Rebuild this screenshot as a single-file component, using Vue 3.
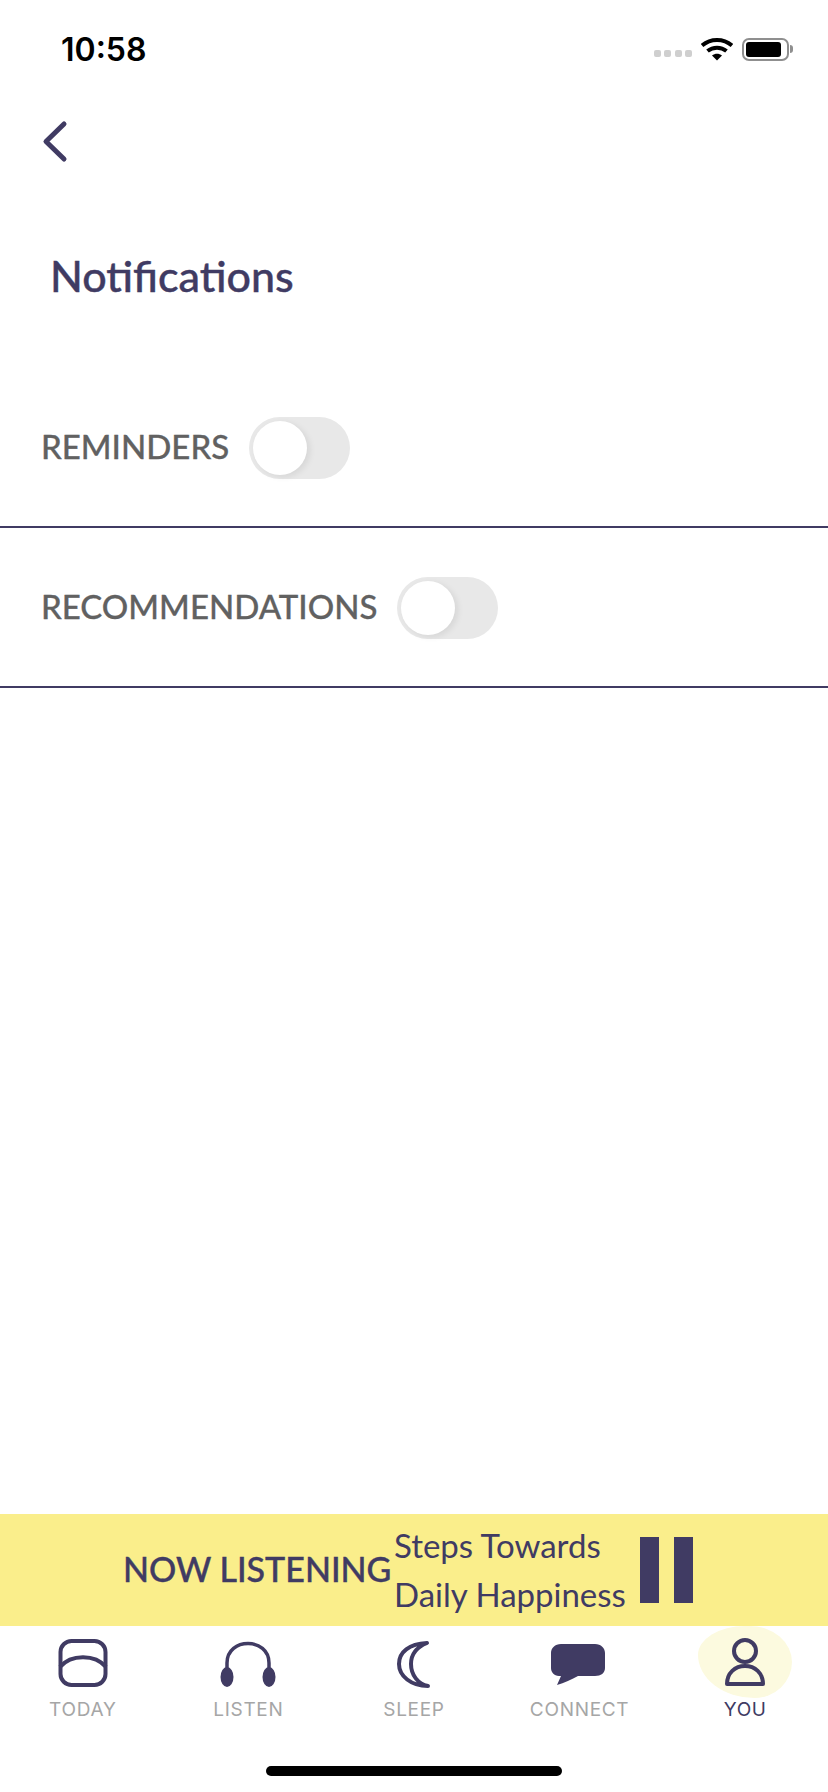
<template>
  <div class="screen">
    <div class="status">
      <span class="time">10:58</span>
      <div class="status-icons">
        <div class="dots"><i></i><i></i><i></i><i></i></div>
        <svg class="wifi" width="32" height="24" viewBox="0 0 32 24">
          <path d="M1 8.500C9.500 1 22.500 1 31 8.500" fill="none" stroke="#000" stroke-width="4" />
          <path d="M6.500 14C12 9.500 20 9.500 25.500 14" fill="none" stroke="#000" stroke-width="4" />
          <path d="M11 18.500C14 16 18 16 21 18.500L16 23.500Z" fill="#000" />
        </svg>
        <div class="battery">
          <div class="battery-body"><div class="battery-level"></div></div>
          <div class="battery-tip"></div>
        </div>
      </div>
    </div>

    <button class="back" type="button">
      <svg width="26" height="44" viewBox="0 0 26 44">
        <path d="M22 4L4 21.500L22 39" fill="none" stroke="#403b63" stroke-width="5" stroke-linecap="round" stroke-linejoin="round" />
      </svg>
    </button>

    <h1 class="title">Notifications</h1>

    <section class="settings">
      <div v-for="row in rows" :key="row" class="row">
        <span class="row-label">{{ row }}</span>
        <div class="toggle"><div class="knob"></div></div>
      </div>
    </section>

    <div class="spacer"></div>

    <section class="player">
      <span class="now">NOW LISTENING</span>
      <div class="track">
        <span>Steps Towards</span>
        <span>Daily Happiness</span>
      </div>
      <div class="pause"><i></i><i></i></div>
    </section>

    <nav class="tabs">
      <div v-for="tab in tabs" :key="tab.label" class="tab" :class="{ active: tab.active }">
        <div v-if="tab.active" class="blob"></div>
        <svg class="tab-icon" width="64" height="52" viewBox="0 0 64 52">
          <template v-if="tab.icon === 'today'">
            <rect x="9.500" y="4" width="45" height="44" rx="11" fill="none" stroke="#403b63" stroke-width="4" />
            <path d="M9 30C20 17 44 17 55 30" fill="none" stroke="#403b63" stroke-width="4" />
          </template>
          <template v-else-if="tab.icon === 'listen'">
            <path d="M11 38V26C11 0 53 0 53 26V38" fill="none" stroke="#403b63" stroke-width="3.500" />
            <ellipse cx="11" cy="40" rx="6.500" ry="10" fill="#403b63" />
            <ellipse cx="53" cy="40" rx="6.500" ry="10" fill="#403b63" />
          </template>
          <template v-else-if="tab.icon === 'sleep'">
            <path d="M45 6C27 7 17 15 17 27C17 39 29 49 46 49C36 47 29 38 29 27C29 17 35 10 45 6Z" fill="none" stroke="#403b63" stroke-width="4" stroke-linejoin="round" />
          </template>
          <template v-else-if="tab.icon === 'connect'">
            <path d="M13 7H47C53 7 57 11 57 16V31C57 36 53 39 47 39H30C24 42 16 46 9 48L13 39H11C6 39 3 35 3 31V16C3 11 7 7 13 7Z" fill="#403b63" />
          </template>
          <template v-else>
            <circle cx="32" cy="14" r="11" fill="none" stroke="#403b63" stroke-width="4" />
            <path d="M14 47C14 36 22 29 32 29C42 29 50 36 50 47Z" fill="none" stroke="#403b63" stroke-width="4" stroke-linejoin="round" />
          </template>
        </svg>
        <span class="tab-label">{{ tab.label }}</span>
      </div>
    </nav>

    <div class="home-bar"><div class="home-indicator"></div></div>
  </div>
</template>

<script setup>
const rows = ["REMINDERS", "RECOMMENDATIONS"]

const tabs = [
  { label: "TODAY", icon: "today" },
  { label: "LISTEN", icon: "listen" },
  { label: "SLEEP", icon: "sleep" },
  { label: "CONNECT", icon: "connect" },
  { label: "YOU", icon: "you", active: true },
]
</script>

<style>
html,
body {
  margin: 0;
  background: #fff;
}
</style>

<style scoped>
.screen {
  width: 828px;
  height: 1792px;
  display: flex;
  flex-direction: column;
  background: #fff;
  overflow: hidden;
  font-family: "Lato", "Liberation Sans", sans-serif;
}

.status {
  height: 100px;
  box-sizing: border-box;
  padding: 31px 35px 0 61px;
  display: flex;
  justify-content: space-between;
  align-items: flex-start;
}

.time {
  font-family: "Inter", sans-serif;
  font-size: 32px;
  font-weight: 600;
  line-height: 38px;
  color: #000;
}

.status-icons {
  display: flex;
  align-items: center;
  gap: 9px;
  margin-top: 6px;
}

.dots {
  display: flex;
  gap: 3.500px;
  margin-top: 8px;
}

.dots i {
  width: 7px;
  height: 7px;
  border-radius: 2px;
  background: #cfcfcf;
}

.battery {
  display: flex;
  align-items: center;
  gap: 1px;
}

.battery-body {
  width: 47px;
  height: 23px;
  box-sizing: border-box;
  border: 2px solid #8f8f8f;
  border-radius: 7px;
  padding: 2px;
}

.battery-level {
  width: 35px;
  height: 15px;
  background: #000;
  border-radius: 3px;
}

.battery-tip {
  width: 3px;
  height: 8px;
  background: #8f8f8f;
  border-radius: 0 3px 3px 0;
}

.back {
  align-self: flex-start;
  margin: 20px 0 0 42px;
  padding: 0;
  border: none;
  background: none;
  height: 44px;
  line-height: 0;
}

.title {
  margin: 85px 0 0 50px;
  font-size: 43px;
  line-height: 54px;
  font-weight: 500;
  color: #403b63;
  -webkit-text-stroke: 0.4px #403b63;
}

.settings {
  margin-top: 65px;
}

.row {
  height: 160px;
  box-sizing: border-box;
  padding: 0 0 0 41px;
  display: flex;
  align-items: center;
  gap: 20px;
  border-bottom: 2px solid #403b63;
}

.row-label {
  margin-top: -2px;
  font-size: 33px;
  font-weight: 500;
  color: #616161;
  -webkit-text-stroke: 0.3px #616161;
}

.toggle {
  width: 101px;
  height: 62px;
  margin-top: 2px;
  box-sizing: border-box;
  padding: 4px;
  border-radius: 31px;
  background: #e8e8e8;
}

.knob {
  width: 54px;
  height: 54px;
  border-radius: 50%;
  background: #fff;
  box-shadow: 3px 2px 6px rgba(0, 0, 0, 0.08);
}

.spacer {
  flex: 1;
}

.player {
  height: 112px;
  flex-shrink: 0;
  box-sizing: border-box;
  padding-left: 123px;
  display: flex;
  align-items: center;
  background: #faee8b;
  color: #403b63;
}

.now {
  width: 271px;
  margin-top: -4px;
  font-size: 34px;
  font-weight: 500;
  white-space: nowrap;
  -webkit-text-stroke: 0.4px #403b63;
}

.track {
  display: flex;
  flex-direction: column;
  width: 246px;
  font-size: 33px;
  line-height: 49px;
  white-space: nowrap;
}

.pause {
  display: flex;
  gap: 15px;
}

.pause i {
  width: 19px;
  height: 66px;
  background: #403b63;
}

.tabs {
  display: grid;
  grid-template-columns: repeat(5, 1fr);
  height: 106px;
  flex-shrink: 0;
}

.tab {
  position: relative;
  display: flex;
  flex-direction: column;
  align-items: center;
  padding-top: 11px;
}

.tab-icon {
  position: relative;
  display: block;
}

.tab-label {
  position: relative;
  margin-top: 9px;
  font-family: "Inter", sans-serif;
  font-size: 19px;
  line-height: 24px;
  letter-spacing: 0.7px;
  color: #a6a6a6;
}

.tab.active .tab-label {
  color: #403b63;
}

.blob {
  position: absolute;
  top: 0;
  left: 36px;
  width: 94px;
  height: 72px;
  border-radius: 50% 45% 40% 60% / 40% 50% 50% 60%;
  background: #fcfadf;
}

.home-bar {
  height: 60px;
  flex-shrink: 0;
  display: flex;
  justify-content: center;
  padding-top: 34px;
  box-sizing: border-box;
}

.home-indicator {
  width: 296px;
  height: 10px;
  border-radius: 5px;
  background: #000;
}
</style>
